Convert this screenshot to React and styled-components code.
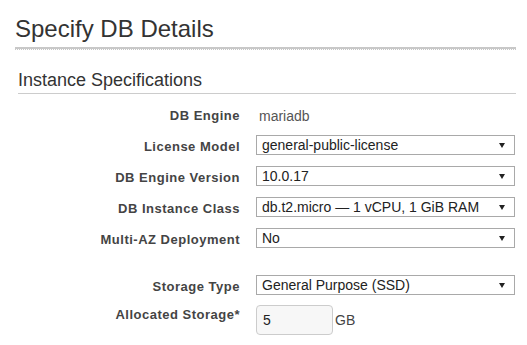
import React from "react";
import styled, { createGlobalStyle } from "styled-components";

const GlobalStyle = createGlobalStyle`
  body {
    margin: 0;
    background: #fff;
    font-family: "Liberation Sans", Arial, sans-serif;
  }
`;

const Page = styled.div`
  padding: 15px 11px 0 15px;
`;

const Title = styled.h1`
  margin: 0;
  font-size: 24px;
  line-height: 28px;
  font-weight: normal;
  color: #333;
`;

const TitleRule = styled.div`
  margin-top: 4px;
  border-top: 2px solid #c8c8c8;
  border-bottom: 1px dotted #c8c8c8;
`;

const Section = styled.div`
  margin: 20px 0 0 3px;
`;

const SectionTitle = styled.h2`
  margin: 0;
  padding-bottom: 3px;
  font-size: 18px;
  line-height: 20px;
  font-weight: normal;
  color: #333;
  border-bottom: 1px solid #ccc;
`;

const Form = styled.div`
  margin-top: 12px;
`;

const Row = styled.div`
  display: flex;
  align-items: flex-start;
  gap: 16px;
  margin-top: ${({ $space }) => $space || 0}px;
`;

const Label = styled.div`
  width: 222px;
  flex: none;
  padding-top: ${({ $offset }) => $offset || 0}px;
  margin-bottom: ${({ $offset }) => -($offset || 0)}px;
  text-align: right;
  font-size: 13px;
  line-height: 20px;
  font-weight: bold;
  letter-spacing: 0.5px;
  color: #444;
`;

const Value = styled.div`
  padding-left: 3px;
  font-size: 14px;
  line-height: 20px;
  color: #555;
`;

const Select = styled.div`
  box-sizing: border-box;
  width: 259px;
  height: 20px;
  display: flex;
  align-items: center;
  justify-content: space-between;
  padding: 0 9px 0 5px;
  border: 1px solid #a9a9a9;
  background: #fff;
  font-size: 14px;
  line-height: 18px;
  color: #222;
  white-space: nowrap;
`;

const Arrow = styled.span`
  width: 0;
  height: 0;
  border-left: 3px solid transparent;
  border-right: 3px solid transparent;
  border-top: 5px solid #222;
`;

const InputGroup = styled.div`
  display: flex;
  align-items: center;
`;

const NumberInput = styled.input`
  box-sizing: border-box;
  width: 77px;
  height: 30px;
  margin: 0;
  padding: 0 6px;
  border: 1px solid #ccc;
  border-radius: 4px;
  background: #f7f7f7;
  font-family: inherit;
  font-size: 14px;
  color: #222;
  outline: none;
`;

const Unit = styled.span`
  margin-left: 2px;
  font-size: 14px;
  line-height: 30px;
  color: #444;
`;

const Dropdown = ({ value }) => (
  <Select>
    <span>{value}</span>
    <Arrow />
  </Select>
);

const fields = [
  { label: "License Model", value: "general-public-license", space: 9 },
  { label: "DB Engine Version", value: "10.0.17", space: 11 },
  { label: "DB Instance Class", value: "db.t2.micro \u2014 1 vCPU, 1 GiB RAM", space: 11 },
  { label: "Multi-AZ Deployment", value: "No", space: 11 },
  { label: "Storage Type", value: "General Purpose (SSD)", space: 27 },
];

export default function App() {
  return (
    <Page>
      <GlobalStyle />
      <Title>Specify DB Details</Title>
      <TitleRule />
      <Section>
        <SectionTitle>Instance Specifications</SectionTitle>
        <Form>
          <Row>
            <Label>DB Engine</Label>
            <Value>mariadb</Value>
          </Row>
          {fields.map((f) => (
            <Row key={f.label} $space={f.space}>
              <Label $offset={2}>{f.label}</Label>
              <Dropdown value={f.value} />
            </Row>
          ))}
          <Row $space={10}>
            <Label>Allocated Storage*</Label>
            <InputGroup>
              <NumberInput defaultValue="5" />
              <Unit>GB</Unit>
            </InputGroup>
          </Row>
        </Form>
      </Section>
    </Page>
  );
}
